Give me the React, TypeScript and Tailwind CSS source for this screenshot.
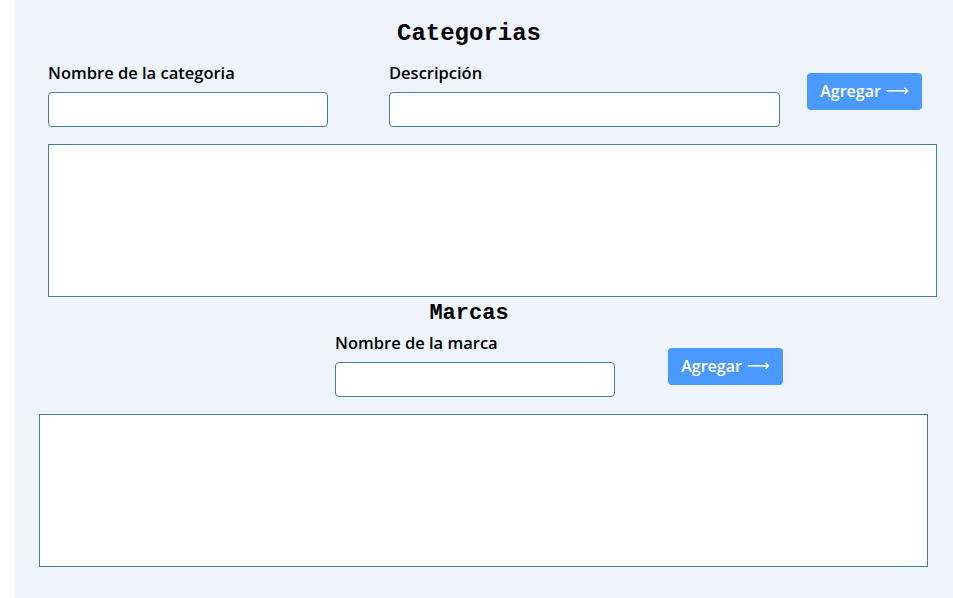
export default function App() {
  const label = "block text-[16.5px] leading-[20px] font-semibold text-black font-['Open_Sans',sans-serif]";
  const input = "mt-[9px] block h-[35px] w-full rounded-[4px] border border-[#457f96] bg-white";
  const button =
    "flex h-[37px] w-[115px] items-center justify-center rounded-[4px] bg-[#4a99ff] pb-[1px] text-[16px] font-semibold text-white font-['Open_Sans',sans-serif]";

  return (
    <div className="min-h-[598px] w-full bg-white">
      <div className="ml-[15px] min-h-[598px] bg-[#eff3fb] pt-[18px]">
        {/* Categorias */}
        <h1 className="w-[908px] text-center text-[24px] leading-[32px] font-bold text-black font-['Liberation_Mono',monospace]">
          Categorias
        </h1>
        <div className="mt-[13px] flex pl-[33px]">
          <div className="w-[280px]">
            <label className={label}>Nombre de la categoria</label>
            <input className={input} />
          </div>
          <div className="ml-[61px] w-[391px]">
            <label className={label}>Descripción</label>
            <input className={input} />
          </div>
          <button className={`${button} ml-[27px] mt-[10px]`}>
            Agregar <span className="ml-[5px] font-['DejaVu_Sans',sans-serif] font-normal">⟶</span>
          </button>
        </div>
        <div className="ml-[33px] mt-[17px] h-[153px] w-[889px] border border-[#457f96] bg-white" />

        {/* Marcas */}
        <h2 className="mt-[3px] w-[908px] text-center text-[22px] leading-[28px] font-bold text-black font-['Liberation_Mono',monospace]">
          Marcas
        </h2>
        <div className="mt-[5px] flex pl-[320px]">
          <div className="w-[280px]">
            <label className={label}>Nombre de la marca</label>
            <input className={input} />
          </div>
          <button className={`${button} ml-[53px] mt-[15px]`}>
            Agregar <span className="ml-[5px] font-['DejaVu_Sans',sans-serif] font-normal">⟶</span>
          </button>
        </div>
        <div className="ml-[24px] mt-[17px] h-[153px] w-[889px] border border-[#457f96] bg-white" />
      </div>
    </div>
  );
}
